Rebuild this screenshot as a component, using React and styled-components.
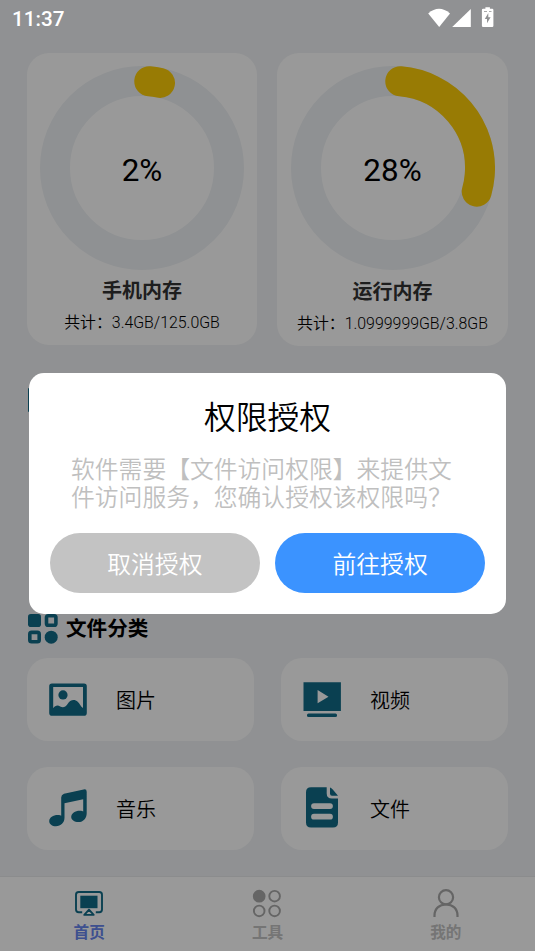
import React from 'react';
import styled, { createGlobalStyle } from 'styled-components';

const TEAL = '#126c88';

const GlobalStyle = createGlobalStyle`
  * { box-sizing: border-box; }
  body { margin: 0; background: #f0f2f5; }
  button { font: inherit; border: 0; padding: 0; }
  svg { display: block; flex: none; }
`;

const Screen = styled.div`
  position: relative;
  width: 535px;
  height: 951px;
  overflow: hidden;
  display: flex;
  flex-direction: column;
  background: #f0f2f5;
  color: #000;
  font-family: Roboto, 'Noto Sans CJK SC', sans-serif;
`;

const StatusBar = styled.header`
  position: relative;
  z-index: 2;
  height: 53px;
  flex: none;
  display: flex;
  justify-content: space-between;
  align-items: flex-start;
  padding: 6px 40px 0 12px;
  color: #fff;
`;

const Clock = styled.span`
  font-size: 20.7px;
  font-weight: 500;
  line-height: 26px;
`;

const MemoryRow = styled.section`
  display: flex;
  gap: 20px;
  padding: 0 27px;
`;

const MemoryCard = styled.article`
  width: ${p => p.$width}px;
  height: ${p => p.$height}px;
  padding-top: 13px;
  display: flex;
  flex-direction: column;
  align-items: center;
  border-radius: 22px;
  background: #fff;
`;

const Gauge = styled.div`
  display: grid;
  justify-items: center;
  align-items: start;
  width: 204px;
  height: ${p => p.$height}px;
  > * { grid-area: 1 / 1; }
`;

const Percent = styled.span`
  font-size: 31.4px;
  line-height: 38px;
  padding-top: 86px;
`;

const MemoryName = styled.h2`
  margin: 8px 0 0;
  font-size: 20px;
  line-height: 26px;
  font-weight: 700;
  color: #333;
`;

const MemoryTotal = styled.p`
  margin: 9px 0 0;
  font-size: 15.9px;
  line-height: 20px;
  font-weight: 350;
  white-space: nowrap;
`;

const HiddenSection = styled.section`
  height: 267px;
  flex: none;
  padding: 42px 28px 0;
`;

const SectionHead = styled.div`
  height: 45px;
  flex: none;
  display: flex;
  align-items: flex-start;
  gap: 8px;
  padding: 1px 28px 0;
`;

const SectionTitle = styled.h2`
  margin: 1px 0 0;
  font-size: 20.6px;
  line-height: 28px;
  font-weight: 700;
`;

const Categories = styled.section`
  display: grid;
  grid-template-columns: 227px 227px;
  grid-auto-rows: 82.6px;
  gap: 26.6px 27px;
  padding: 0 27px;
`;

const Category = styled.article`
  display: flex;
  align-items: center;
  gap: 27px;
  padding-left: 20px;
  border-radius: 21px;
  background: #fff;
`;

const CategoryLabel = styled.span`
  padding-top: 2px;
  font-size: 20px;
  line-height: 28px;
  font-weight: 350;
  font-family: 'Noto Sans CJK SC DemiLight', 'Noto Sans CJK SC', sans-serif;
`;

const NavBar = styled.nav`
  height: 75px;
  flex: none;
  margin-top: auto;
  display: grid;
  grid-template-columns: repeat(3, 1fr);
  background: #fff;
  border-top: 1px solid #e8eaec;
`;

const NavItem = styled.div`
  display: flex;
  flex-direction: column;
  align-items: center;
  padding-top: 11px;
  gap: 4px;
  font-size: 15.6px;
  line-height: 22px;
  font-weight: 700;
  color: ${p => (p.$active ? '#6785ee' : '#c3c3c3')};
`;

const Overlay = styled.div`
  position: absolute;
  inset: 0;
  padding: 373px 29px 0;
  background: rgba(0, 0, 0, 0.4);
`;

const Dialog = styled.div`
  height: 240.5px;
  padding: 19px 21px 0;
  border-radius: 15px;
  background: #fff;
  font-weight: 350;
  font-family: 'Noto Sans CJK SC DemiLight', 'Noto Sans CJK SC', sans-serif;
`;

const DialogTitle = styled.h1`
  margin: 0;
  font-size: 31.8px;
  line-height: 46px;
  font-weight: inherit;
  text-align: center;
`;

const DialogText = styled.p`
  width: 384px;
  margin: 16px 0 0 21px;
  font-size: 23.8px;
  line-height: 28px;
  color: #bfbfbf;
`;

const Actions = styled.div`
  display: grid;
  grid-template-columns: 1fr 1fr;
  gap: 15.5px;
  margin-top: 23px;
`;

const Action = styled.button`
  height: 60px;
  border-radius: 30px;
  font-size: 23.8px;
  line-height: 58px;
  padding-bottom: 1px;
  color: #fff;
  background: ${p => (p.$primary ? '#3b93ff' : '#c3c3c3')};
`;

function StatusIcons() {
  return (
    <svg width="70" height="24" viewBox="0 0 70 24" fill="#fff">
      <path d="M3.2 7.5Q14 -1.8 25 7.5L14.2 21Z" />
      <path d="M45.8 3V21H27.2Z" />
      <path fillRule="evenodd" d="M60.4 1.2h4.5v1.6h2.3q1.2 0 1.2 1.2v15.8q0 1.2-1.2 1.2h-9.1q-1.2 0-1.2-1.2V4q0-1.2 1.2-1.2h2.3ZM63.3 7l-3.5 6h2.2v4.2l3.6-6h-2.3Z" />
      <path d="M59 5.5h3M64 5.5h2.5" stroke="#a9aaab" strokeWidth="1" />
    </svg>
  );
}

function Ring({ value }) {
  const length = 2 * Math.PI * 87;
  return (
    <svg width="204" height="204" viewBox="0 0 204 204" fill="none" strokeWidth="30">
      <circle cx="102" cy="102" r="87" stroke="#eff2f5" />
      <circle
        cx="102"
        cy="102"
        r="87"
        stroke="#fecd07"
        strokeLinecap="round"
        strokeDasharray={`${(length * value) / 100} ${length}`}
        transform="rotate(-85.2 102 102)"
      />
    </svg>
  );
}

function GridIcon() {
  return (
    <svg width="30" height="30" viewBox="0 0 30 30" fill={TEAL}>
      <rect x="0" y="0" width="13" height="13" rx="2.8" />
      <rect x="18.5" y="1.8" width="9.4" height="9.4" rx="1.8" fill="none" stroke={TEAL} strokeWidth="3.6" />
      <rect x="1.8" y="18.4" width="9.4" height="9.4" rx="1.8" fill="none" stroke={TEAL} strokeWidth="3.6" />
      <circle cx="23.2" cy="23.2" r="6.5" />
    </svg>
  );
}

function ImageIcon() {
  return (
    <svg width="42" height="42" viewBox="0 -0.7 42 42" fill={TEAL}>
      <path
        fillRule="evenodd"
        d="M5 4.7h32q2.8 0 2.8 2.8v26.7q0 2.8-2.8 2.8H5q-2.8 0-2.8-2.8V7.5q0-2.8 2.8-2.8ZM6.2 8.2v21.3c1.8-2.7 4.5-3.5 7-1.8 2.6 1.5 5.3.8 7.2-2.2 2.3-4.2 7-5.7 10.3-2.5 2.1 2 2.9 4.5 5.3 6.4V8.2Z"
      />
      <circle cx="16" cy="16.2" r="4.6" />
    </svg>
  );
}

function VideoIcon() {
  return (
    <svg width="42" height="42" viewBox="0 -0.7 42 42" fill={TEAL}>
      <path fillRule="evenodd" d="M2.5 3.5h37.4v28.8H2.5ZM16.6 11.2v13.4L27.5 18Z" />
      <rect x="6" y="34.7" width="30" height="3.6" rx="1.5" />
    </svg>
  );
}

function MusicIcon() {
  return (
    <svg width="42" height="42" viewBox="0 0 42 42" fill={TEAL}>
      <path d="M14.2 10.5Q14.2 7.7 17 6.7L36.6 2.4Q39.7 1.7 39.7 4.7V26.2C39.7 31.3 36.4 35 31.5 35 27.3 35 24.2 32.9 24.2 30 24.2 26.1 29 23.2 34 23.8Q35.2 24 36.2 24.5V12.2L17.5 16.2V30.8C17.5 35.8 13.8 39.2 9 39.2 5 39.2 2.2 37.1 2.2 34.2 2.2 30.1 7.2 27.5 12 28.1Q13.2 28.2 14.2 28.7Z" />
    </svg>
  );
}

function FileIcon() {
  return (
    <svg width="42" height="42" viewBox="0 0 42 42" fill={TEAL}>
      <path
        fillRule="evenodd"
        d="M10 .2H25.7V6.4Q25.7 11.4 31 11.4H37V35.6Q37 40.6 32 40.6H10Q5 40.6 5 35.6V5.2Q5 .2 10 .2ZM13 16.2a2.9 2.9 0 0 0 0 5.8H29a2.9 2.9 0 0 0 0-5.8ZM13 26.8a2.9 2.9 0 0 0 0 5.8H29a2.9 2.9 0 0 0 0-5.8Z"
      />
      <path d="M29 .4Q30.5.4 37 8.8H31Q29 8.8 29 6.6Z" />
    </svg>
  );
}

function HomeIcon() {
  return (
    <svg width="30" height="30" viewBox="0 0 30 30" fill="none" stroke={TEAL} strokeWidth="1.9">
      <path d="M8.2 24.2H4.7Q2 24.2 2 21.5V6.7Q2 4 4.7 4H25.3Q28 4 28 6.7V21.5Q28 24.2 25.3 24.2H21.8" />
      <rect x="6.3" y="7.7" width="17.2" height="12.5" fill={TEAL} stroke="none" />
      <path d="M15 21.6L19.7 26.9H10.3Z" strokeLinejoin="round" />
    </svg>
  );
}

function ToolsIcon() {
  return (
    <svg width="30" height="30" viewBox="0 0 30 30" fill="none" stroke="#a8a8a8" strokeWidth="1.9">
      <circle cx="7.2" cy="8.2" r="5.4" fill="#a8a8a8" />
      <circle cx="22.6" cy="8.2" r="5.3" />
      <circle cx="7.2" cy="22.9" r="5.3" />
      <circle cx="22.6" cy="22.9" r="5.3" />
    </svg>
  );
}

function ProfileIcon() {
  return (
    <svg width="30" height="30" viewBox="0 0 30 30" fill="none" stroke="#a8a8a8" strokeWidth="2.2">
      <circle cx="15" cy="9.3" r="7.1" />
      <path d="M3.5 29V27.5C3.5 20.5 8.3 16.5 15 16.5S26.5 20.5 26.5 27.5V29" />
    </svg>
  );
}

const memory = [
  { value: 2, name: '手机内存', total: '共计：3.4GB/125.0GB', width: 230, height: 292, gauge: 204 },
  { value: 28, name: '运行内存', total: '共计：1.0999999GB/3.8GB', width: 231, height: 293, gauge: 205 },
];

const categories = [
  ['图片', ImageIcon],
  ['视频', VideoIcon],
  ['音乐', MusicIcon],
  ['文件', FileIcon],
];

const tabs = [
  ['首页', HomeIcon],
  ['工具', ToolsIcon],
  ['我的', ProfileIcon],
];

export default function App() {
  return (
    <>
      <GlobalStyle />
      <Screen>
        <StatusBar>
          <Clock>11:37</Clock>
          <StatusIcons />
        </StatusBar>
        <MemoryRow>
          {memory.map(m => (
            <MemoryCard key={m.name} $width={m.width} $height={m.height}>
              <Gauge $height={m.gauge}>
                <Ring value={m.value} />
                <Percent>{m.value}%</Percent>
              </Gauge>
              <MemoryName>{m.name}</MemoryName>
              <MemoryTotal>{m.total}</MemoryTotal>
            </MemoryCard>
          ))}
        </MemoryRow>
        <HiddenSection>
          <svg width="30" height="24" viewBox="0 0 30 24">
            <rect width="30" height="24" rx="1" fill={TEAL} />
          </svg>
        </HiddenSection>
        <SectionHead>
          <GridIcon />
          <SectionTitle>文件分类</SectionTitle>
        </SectionHead>
        <Categories>
          {categories.map(([label, Icon]) => (
            <Category key={label}>
              <Icon />
              <CategoryLabel>{label}</CategoryLabel>
            </Category>
          ))}
        </Categories>
        <NavBar>
          {tabs.map(([label, Icon], i) => (
            <NavItem key={label} $active={i === 0}>
              <Icon />
              {label}
            </NavItem>
          ))}
        </NavBar>
        <Overlay>
          <Dialog role="dialog" aria-modal="true">
            <DialogTitle>权限授权</DialogTitle>
            <DialogText>软件需要【文件访问权限】来提供文件访问服务，您确认授权该权限吗？</DialogText>
            <Actions>
              <Action>取消授权</Action>
              <Action $primary>前往授权</Action>
            </Actions>
          </Dialog>
        </Overlay>
      </Screen>
    </>
  );
}
